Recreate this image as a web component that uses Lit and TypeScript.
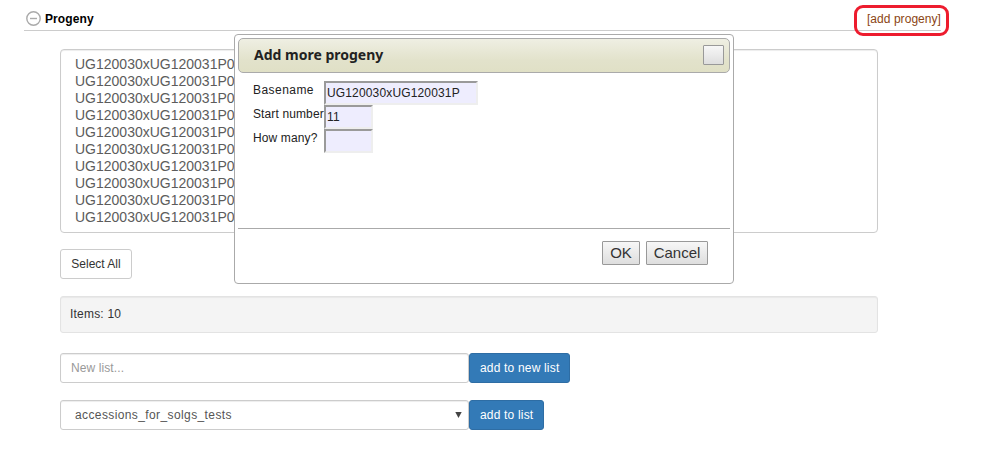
import { LitElement, html, css } from "lit";
import { customElement } from "lit/decorators.js";

@customElement("progeny-dialog")
class ProgenyDialog extends LitElement {
  static styles = css`
    :host { display: block; box-sizing: border-box; width: 500px; height: 250px; padding: 3px;
      background: #fff; border: 1px solid #aaa; border-radius: 4px; color: #222; }
    * { box-sizing: border-box; }
    .title { display: flex; align-items: center; justify-content: space-between; height: 35px;
      padding: 0 5px 0 15px; border: 1px solid #aaa; border-radius: 5px;
      background: linear-gradient(#efefe3 0, #e2e2cb 65%, #e0e0c6 100%); }
    .title b { padding-bottom: 2px; font: bold 14px/20px "Noto Sans", "Open Sans", sans-serif; letter-spacing: 0; }
    .close { width: 21px; height: 20px; margin-top: -1px; padding: 0; border: 1px solid #999; border-radius: 1px;
      background: linear-gradient(#f7f7f7, #dedede); }
    .body { height: 156px; padding: 8px 0 0 15px; border-bottom: 1px solid #aaa; }
    .row { display: flex; height: 24px; line-height: 18px; }
    .row label { width: 71px; white-space: nowrap; letter-spacing: 0.12px; }
    .row label.wide { letter-spacing: 0.45px; }
    .row input { width: 49px; height: 24px; margin: 0; padding: 0 0 0 1px; background: #eeedfe; color: #222;
      border: 2px solid; border-color: #9a9a9a #eee #eee #9a9a9a; border-radius: 0; font: inherit; letter-spacing: 0.15px; }
    .row input.long { width: 154px; }
    .foot { display: flex; justify-content: flex-end; gap: 6px; padding: 12px 22px 0; }
    .foot button { height: 24px; width: 62px; padding: 0; border: 1px solid #999; border-radius: 1px;
      background: linear-gradient(#f7f7f7, #dedede); font: 15px/22px "Liberation Sans", sans-serif; color: #333; }
    .foot button.ok { width: 38px; }
  `;
  render() {
    return html`
      <div class="title"><b>Add more progeny</b><button class="close"></button></div>
      <div class="body">
        <div class="row"><label class="wide">Basename</label><input class="long" .value=${"UG120030xUG120031P"} /></div>
        <div class="row"><label>Start number</label><input .value=${"11"} /></div>
        <div class="row"><label>How many?</label><input /></div>
      </div>
      <div class="foot"><button class="ok">OK</button><button>Cancel</button></div>
    `;
  }
}

@customElement("app-root")
class AppRoot extends LitElement {
  static styles = css`
    :host { display: block; position: relative; height: 452px; overflow: hidden; background: #fff;
      font: 12px/18px "Liberation Sans", Arial, sans-serif; color: #333; }
    * { box-sizing: border-box; }
    .head { display: flex; align-items: center; height: 31px; margin: 0 45px 0 24px; padding: 7px 0 0 2px;
      border-bottom: 1px solid #ccc; }
    .head svg { width: 15px; height: 15px; margin-right: 4px; }
    .head b { flex: 1; color: #000; letter-spacing: 0.1px; }
    .add { color: #8b4513; letter-spacing: 0.05px; }
    .mark { position: absolute; left: 854px; top: 5px; width: 95px; height: 31px; border: 3px solid #ed1c2e; border-radius: 9px; }
    .content { width: 818px; margin: 18px 0 0 60px; }
    .items { height: 184px; padding: 6px 14px; border: 1px solid #ccc; border-radius: 4px;
      box-shadow: inset 0 1px 1px rgba(0,0,0,.075); font-size: 14px; line-height: 17px; color: #5c5c5c; }
    .btn { height: 30px; padding: 0 10px; border: 1px solid #ccc; border-radius: 3px; background: #fff;
      font: inherit; color: #333; white-space: nowrap; }
    .all { display: block; width: 72px; margin-top: 16px; }
    .well { height: 37px; margin-top: 17px; padding: 8px 9px; border: 1px solid #e3e3e3; border-radius: 3px;
      background: #f4f4f4; box-shadow: inset 0 1px 1px rgba(0,0,0,.05); letter-spacing: 0.2px; }
    .line { display: flex; height: 30px; margin-top: 20px; }
    .line + .line { margin-top: 17px; }
    .field { display: flex; align-items: center; width: 409px; height: 30px; padding: 0 10px; border: 1px solid #ccc;
      border-radius: 3px; box-shadow: inset 0 1px 1px rgba(0,0,0,.075); background: #fff; color: #555; font: inherit; }
    .field::placeholder { color: #999; opacity: 1; }
    .field.input { letter-spacing: 0.1px; }
    .select { justify-content: space-between; padding: 0 6px 0 14px; letter-spacing: 0.39px; }
    .select svg { width: 7px; height: 6px; }
    .primary { width: 101px; color: #fff; background: #337ab7; border-color: #2e6da4; letter-spacing: 0.18px; }
    .primary.short { width: 75px; }
    progeny-dialog { position: absolute; left: 234px; top: 34px; }
  `;
  render() {
    const names = Array.from({ length: 10 }, (_, i) => `UG120030xUG120031P0${String(i + 1).padStart(2, "0")}`);
    return html`
      <div class="head">
        <svg viewBox="0 0 15 15" fill="none" stroke="#aaa" stroke-width="1.4"><circle cx="7.5" cy="7.5" r="6.7" /><path d="M4 7.5h7" /></svg>
        <b>Progeny</b><span class="add">[add progeny]</span>
      </div>
      <div class="content">
        <div class="items">${names.map((n) => html`<div>${n}</div>`)}</div>
        <button class="btn all">Select All</button>
        <div class="well">Items: 10</div>
        <div class="line"><input class="field input" placeholder="New list..." /><button class="btn primary">add to new list</button></div>
        <div class="line">
          <div class="field select"><span>accessions_for_solgs_tests</span><svg viewBox="0 0 7 6"><path fill="#444" d="M.3 0h6.4L3.5 6z" /></svg></div>
          <button class="btn primary short">add to list</button>
        </div>
      </div>
      <span class="mark"></span>
      <progeny-dialog></progeny-dialog>
    `;
  }
}
